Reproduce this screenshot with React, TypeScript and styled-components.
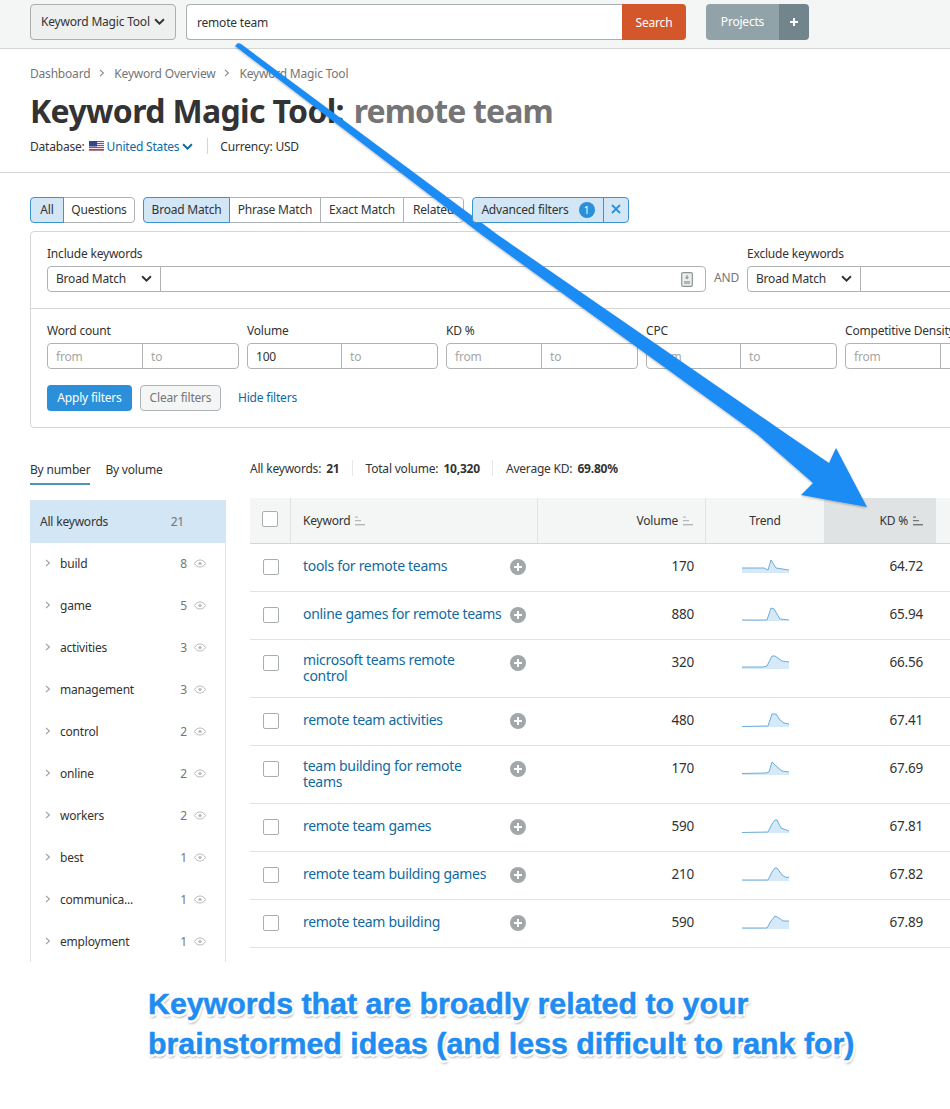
import React from "react";
import styled, { createGlobalStyle } from "styled-components";

const Global = createGlobalStyle`
  html, body { margin: 0; padding: 0; background: #fff; }
  * { box-sizing: border-box; }
`;

const Page = styled.div`
  position: relative;
  width: 950px;
  height: 1109px;
  overflow: hidden;
  background: #fff;
  color: #333;
  font-family: "Noto Sans", "Open Sans", sans-serif;
  font-size: 12px;
  letter-spacing: -0.2px;
`;

const TopBar = styled.header`
  display: flex;
  align-items: center;
  height: 49px;
  padding: 0 0 5px 30px;
  background: #f4f5f5;
  border-bottom: 1px solid #d4d6d6;
`;
const ToolSelect = styled.div`
  display: flex;
  align-items: center;
  justify-content: space-between;
  width: 146px;
  height: 36px;
  padding: 0 10px 0 10px;
  background: #eef0f0;
  border: 1px solid #a9aeb0;
  border-radius: 4px;
  color: #333;
  white-space: nowrap;
`;
const SearchInput = styled.div`
  display: flex;
  align-items: center;
  width: 436px;
  height: 36px;
  margin-left: 10px;
  padding: 2px 0 0 10px;
  background: #fff;
  border: 1px solid #a9aeb0;
  border-right: 0;
  border-radius: 4px 0 0 4px;
`;
const SearchButton = styled.div`
  display: flex;
  align-items: center;
  justify-content: center;
  width: 64px;
  height: 36px;
  padding-top: 2px;
  background: #d3572b;
  border-radius: 0 4px 4px 0;
  color: #fff;
`;
const ProjectsLabel = styled.div`
  display: flex;
  align-items: center;
  justify-content: center;
  width: 73px;
  height: 36px;
  margin-left: 20px;
  padding-bottom: 1px;
  background: #92a2a9;
  border-radius: 4px 0 0 4px;
  color: #fff;
`;
const ProjectsPlus = styled.div`
  display: flex;
  align-items: center;
  justify-content: center;
  width: 30px;
  height: 36px;
  background: #72858d;
  border-radius: 0 4px 4px 0;
  color: #fff;
`;

const Header = styled.section`
  height: 124px;
  padding: 16px 30px 0;
  border-bottom: 1px solid #d4d6d6;
`;
const Crumbs = styled.nav`
  display: flex;
  align-items: center;
  height: 16px;
  color: #757575;
`;
const CrumbSep = styled.span`
  display: inline-flex;
  margin: 0 9px 0 9px;
  color: #8a8a8a;
`;
const Title = styled.h1`
  margin: 8px 0 0;
  height: 44px;
  font-size: 32px;
  line-height: 44px;
  font-weight: 700;
  letter-spacing: -0.65px;
  color: #333;
  white-space: nowrap;
`;
const TitleQuery = styled.span`
  margin-left: 2px;
  letter-spacing: -0.85px;
  color: #757575;
`;
const MetaRow = styled.div`
  display: flex;
  align-items: center;
  height: 18px;
  margin-top: 4px;
`;
const BlueText = styled.span`
  color: #0f6a9f;
`;
const Flag = styled.svg`
  width: 15px;
  height: 10px;
  margin: 0 3px 0 4px;
`;
const MetaDivider = styled.span`
  width: 1px;
  height: 16px;
  margin: 0 12px 0 14px;
  background: #d4d6d6;
`;

const TabsRow = styled.div`
  display: flex;
  margin: 24px 0 8px 30px;
  gap: 8px;
`;
const Segment = styled.div`
  display: flex;
`;
const Tab = styled.div<{ $w: number; $active?: boolean }>`
  display: flex;
  align-items: center;
  justify-content: center;
  width: ${(p) => p.$w}px;
  height: 26px;
  margin-left: -1px;
  padding-bottom: 2px;
  background: ${(p) => (p.$active ? "#d2e6f5" : "#fff")};
  border: 1px solid ${(p) => (p.$active ? "#3d93cc" : "#b0b3b5")};
  position: relative;
  z-index: ${(p) => (p.$active ? 1 : 0)};
  color: #333;
  &:first-child {
    margin-left: 0;
    border-radius: 4px 0 0 4px;
  }
  &:last-child {
    border-radius: 0 4px 4px 0;
  }
`;
const TabBadge = styled.span`
  display: inline-flex;
  align-items: center;
  justify-content: center;
  width: 16px;
  height: 16px;
  margin: 2px 0 0 10px;
  background: #2b90d9;
  border-radius: 50%;
  color: #fff;
  font-size: 10px;
`;

const FilterPanel = styled.section`
  width: 1000px;
  margin-left: 30px;
  height: 197px;
  border: 1px solid #d4d6d6;
  border-radius: 4px;
`;
const IncludeBlock = styled.div`
  display: flex;
  height: 77px;
  padding: 13px 0 0 16px;
  border-bottom: 1px solid #d4d6d6;
`;
const FieldColumn = styled.div`
  display: flex;
  flex: none;
  flex-direction: column;
`;
const FieldLabel = styled.div`
  height: 16px;
  margin: 1px 0 4px;
  line-height: 16px;
  color: #333;
  white-space: nowrap;
`;
const InputRow = styled.div`
  display: flex;
  align-items: center;
`;
const MatchSelect = styled.div`
  display: flex;
  align-items: center;
  justify-content: space-between;
  width: 114px;
  height: 26px;
  padding: 0 8px 2px 8px;
  border: 1px solid #b0b3b5;
  border-radius: 4px 0 0 4px;
  color: #333;
`;
const MatchInput = styled.div<{ $w: number }>`
  display: flex;
  align-items: center;
  justify-content: flex-end;
  width: ${(p) => p.$w}px;
  height: 26px;
  margin-left: -1px;
  padding-right: 12px;
  border: 1px solid #b0b3b5;
  border-radius: 0 4px 4px 0;
`;
const AndLabel = styled.div`
  flex: none;
  width: 41px;
  margin-top: 21px;
  line-height: 24px;
  padding-left: 8px;
  color: #757575;
`;

const RangeBlock = styled.div`
  padding: 13px 0 0 16px;
`;
const RangeRow = styled.div`
  display: flex;
  gap: 8px;
`;
const RangeGroup = styled.div`
  display: flex;
  height: 26px;
  border: 1px solid #b0b3b5;
  border-radius: 4px;
`;
const RangeCell = styled.div<{ $w: number; $filled?: boolean }>`
  display: flex;
  align-items: center;
  width: ${(p) => p.$w}px;
  padding-left: 8px;
  color: ${(p) => (p.$filled ? "#333" : "#a6a6a6")};
  & + & {
    border-left: 1px solid #b0b3b5;
  }
`;
const FilterActions = styled.div`
  display: flex;
  align-items: center;
  margin-top: 16px;
`;
const ApplyButton = styled.div`
  display: flex;
  align-items: center;
  justify-content: center;
  width: 85px;
  height: 26px;
  padding-bottom: 2px;
  background: #2b90d9;
  border-radius: 4px;
  color: #fff;
`;
const ClearButton = styled.div`
  display: flex;
  align-items: center;
  justify-content: center;
  width: 81px;
  height: 26px;
  margin-left: 8px;
  padding-bottom: 2px;
  background: #f4f5f5;
  border: 1px solid #b0b3b5;
  border-radius: 4px;
  color: #757575;
`;
const HideLink = styled.div`
  margin: -2px 0 0 17px;
  color: #0f6a9f;
`;

const Workspace = styled.div`
  display: flex;
  height: 535px;
  padding-left: 30px;
`;
const Sidebar = styled.aside`
  flex: 0 0 196px;
`;
const SideTabs = styled.div`
  display: flex;
  gap: 15px;
  height: 57px;
  padding-top: 33px;
`;
const SideTab = styled.div<{ $active?: boolean }>`
  height: 24px;
  line-height: 18px;
  border-bottom: ${(p) => (p.$active ? "2px solid #4e94b5" : "0")};
`;
const SideList = styled.div`
  height: 462px;
  margin-top: 15px;
  border: 1px solid #e0e2e3;
  border-top: 0;
  border-bottom: 0;
`;
const SideAll = styled.div`
  display: flex;
  align-items: center;
  height: 43px;
  margin: 0 -1px;
  padding: 0 10px;
  background: #d2e6f5;
`;
const SideAllLabel = styled.span`
  flex: 1;
`;
const SideAllCount = styled.span`
  margin-right: 32px;
  color: #757575;
`;
const SideRow = styled.div`
  display: flex;
  align-items: center;
  height: 42px;
  padding: 0 19px 2px 14px;
`;
const SideLabel = styled.span`
  flex: 1;
  margin-left: 9px;
  color: #333;
`;
const SideCount = styled.span`
  margin-right: 7px;
  color: #757575;
`;

const Main = styled.main`
  flex: 0 0 724px;
  margin-left: 24px;
`;
const Stats = styled.div`
  display: flex;
  align-items: center;
  height: 70px;
  padding-top: 10px;
`;
const StatValue = styled.b`
  margin-left: 5px;
  font-weight: 700;
`;
const StatDivider = styled.span`
  width: 1px;
  height: 16px;
  margin: 0 13px 0 12px;
  background: #e6e7e8;
`;
const TableGrid = `
  display: grid;
  grid-template-columns: 41px 247px 168px 119px 111px 38px;
`;
const HeadRow = styled.div`
  ${TableGrid}
  height: 46px;
  border-bottom: 1px solid #d4d6d6;
`;
const HeadCell = styled.div<{ $align?: string; $sorted?: boolean }>`
  display: flex;
  align-items: center;
  justify-content: ${(p) => p.$align || "flex-start"};
  gap: 5px;
  padding: 0 ${(p) => (p.$sorted ? 13 : 12)}px 0 12px;
  background: ${(p) => (p.$sorted ? "#e0e3e4" : "#f4f5f5")};
  border-right: ${(p) => (p.$sorted ? "0" : "1px solid #e0e2e3")};
  color: #333;
`;
const CheckHeadCell = styled(HeadCell)`
  padding: 0 0 4px 0;
`;
const BodyRow = styled.div<{ $h: number }>`
  ${TableGrid}
  height: ${(p) => p.$h}px;
  border-bottom: 1px solid #e0e2e3;
  align-items: start;
`;
const CheckCell = styled.div`
  display: flex;
  justify-content: center;
  padding-top: 15px;
`;
const HeadCheck = styled.div`
  width: 16px;
  height: 16px;
  background: #fff;
  border: 1px solid #a9aeb0;
  border-radius: 2px;
`;
const Check = styled(HeadCheck)``;
const KeywordCell = styled.div`
  display: flex;
  justify-content: space-between;
  padding: 14px 12px 0 12px;
`;
const KeywordLink = styled.span<{ $wrapped?: boolean }>`
  width: ${(p) => (p.$wrapped ? 180 : 202)}px;
  margin-top: ${(p) => (p.$wrapped ? -2 : 0)}px;
  font-size: 14px;
  line-height: 16px;
  letter-spacing: -0.3px;
  color: #0f6a9f;
`;
const PlusDot = styled.span`
  display: flex;
  align-items: center;
  justify-content: center;
  flex: none;
  width: 16px;
  height: 16px;
  margin-top: 1px;
  background: #a2a7aa;
  border-radius: 50%;
`;
const NumCell = styled.div<{ $right?: number }>`
  padding: 14px ${(p) => p.$right ?? 12}px 0 0;
  font-size: 13.5px;
  line-height: 16px;
  text-align: right;
  color: #333;
`;
const TrendCell = styled.div`
  display: flex;
  justify-content: center;
  padding-top: 13px;
  padding-right: 1px;
`;

const Caption = styled.p`
  margin: 0;
  padding: 21px 0 0 148px;
  font-family: "Liberation Sans", Arial, sans-serif;
  font-size: 30.35px;
  line-height: 40px;
  font-weight: 700;
  letter-spacing: 0;
  color: #1e8cf0;
  white-space: nowrap;
  -webkit-text-stroke: 0.5px #1e8cf0;
  text-shadow: -2px -1px 0 #fff, 2px -1px 0 #fff, -2px 2px 0 #fff, 2px 2px 0 #fff, 0 -2px 0 #fff, 0 3px 1px #fff,
    1px 3px 3px rgba(0, 0, 0, 0.55);
`;

const ArrowLayer = styled.svg`
  position: absolute;
  left: 0;
  top: 0;
  pointer-events: none;
`;

const Chevron = ({ size = 10, color = "#333" }: { size?: number; color?: string }) => (
  <svg width={size} height={size} viewBox="0 0 10 10" fill="none">
    <path d="M1 3l4 4 4-4" stroke={color} strokeWidth="1.8" />
  </svg>
);
const RightChevron = ({ color = "#9a9ea1" }: { color?: string }) => (
  <svg width="6" height="8" viewBox="0 0 6 8" fill="none">
    <path d="M1 .8L4.4 4 1 7.2" stroke={color} strokeWidth="1.1" />
  </svg>
);
const Eye = () => (
  <svg width="12" height="9" viewBox="0 0 12 9" fill="none">
    <path d="M.5 4.5C2 2 4 1 6 1s4 1 5.5 3.5C10 7 8 8 6 8S2 7 .5 4.5z" stroke="#b4b8ba" strokeWidth="1" />
    <circle cx="6" cy="4.5" r="1.6" fill="#b4b8ba" />
  </svg>
);
const SortIcon = ({ color = "#b4b8ba" }: { color?: string }) => (
  <svg width="10" height="10" viewBox="0 0 10 10" fill={color}>
    <rect x="0" y="0.5" width="3" height="1.2" />
    <rect x="0" y="4" width="6" height="1.2" />
    <rect x="0" y="8" width="10" height="1.4" />
  </svg>
);
const Plus = ({ size = 8, width = 2 }: { size?: number; width?: number }) => (
  <svg width={size} height={size} viewBox="0 0 8 8" stroke="#fff" strokeWidth={width}>
    <path d="M4 0v8M0 4h8" />
  </svg>
);
const UsFlag = () => (
  <Flag viewBox="0 0 15 10">
    <rect width="15" height="10" fill="#f3e6ea" />
    {[0, 2, 4, 6, 8].map((y) => (
      <rect key={y} y={y} width="15" height="1" fill="#c8384a" />
    ))}
    <rect width="8" height="5.5" fill="#38458a" />
    <rect y="9.4" width="15" height=".6" fill="#8a3040" />
  </Flag>
);
const ImportIcon = () => (
  <svg width="12" height="15" viewBox="0 0 12 15" fill="none">
    <rect x=".7" y=".7" width="10.6" height="13.6" rx="1.4" stroke="#8f9497" strokeWidth="1.2" fill="#eceded" />
    <path d="M6 3v3M4.6 5L6 6.6 7.4 5" stroke="#8f9497" strokeWidth="1.1" />
    <rect x="3" y="9" width="6" height="3" fill="#b0b4b6" />
  </svg>
);
const Spark = ({ pts }: { pts: string }) => (
  <svg width="47" height="16" viewBox="0 0 47 16">
    <polygon points={`0,16 ${pts} 47,16`} fill="#d5e9f9" />
    <polyline points={pts} fill="none" stroke="#6fadd8" strokeWidth="1" />
  </svg>
);

const sideItems: [string, number][] = [
  ["build", 8],
  ["game", 5],
  ["activities", 3],
  ["management", 3],
  ["control", 2],
  ["online", 2],
  ["workers", 2],
  ["best", 1],
  ["communica...", 1],
  ["employment", 1],
];

const rows = [
  { k: "tools for remote teams", v: 170, d: "64.72", h: 48, p: "0,11 22,11 26,13 29,3 34,11 47,13" },
  { k: "online games for remote teams", v: 880, d: "65.94", h: 48, p: "0,15 25,15 29,3 32,4 38,14 47,15" },
  { k: "microsoft teams remote control", v: 320, d: "66.56", h: 58, p: "0,14 21,14 25,13 30,3 33,3 40,8 47,9" },
  { k: "remote team activities", v: 480, d: "67.41", h: 48, p: "0,15.5 26,15 30,3 34,3 38,9 42,12 47,13" },
  { k: "team building for remote teams", v: 170, d: "67.69", h: 58, p: "0,14.5 24,14 27,13 30,3 34,7 40,12 47,13" },
  { k: "remote team games", v: 590, d: "67.81", h: 48, p: "0,15.5 26,15 30,7 33,3 35,3 39,11 47,14" },
  { k: "remote team building games", v: 210, d: "67.82", h: 48, p: "0,15 26,15 30,7 33,3 35,3 40,10 44,12.5 47,12" },
  { k: "remote team building", v: 590, d: "67.89", h: 48, p: "0,15 25,15 29,8 33,3 37,5 41,8 47,8" },
];

export default function App() {
  return (
    <Page>
      <Global />
      <TopBar>
        <ToolSelect>
          Keyword Magic Tool <Chevron size={11} />
        </ToolSelect>
        <SearchInput>remote team</SearchInput>
        <SearchButton>Search</SearchButton>
        <ProjectsLabel>Projects</ProjectsLabel>
        <ProjectsPlus>
          <Plus />
        </ProjectsPlus>
      </TopBar>
      <Header>
        <Crumbs>
          Dashboard
          <CrumbSep>
            <RightChevron color="#8a8a8a" />
          </CrumbSep>
          Keyword Overview
          <CrumbSep>
            <RightChevron color="#8a8a8a" />
          </CrumbSep>
          Keyword Magic Tool
        </Crumbs>
        <Title>
          Keyword Magic Tool: <TitleQuery>remote team</TitleQuery>
        </Title>
        <MetaRow>
          Database:
          <UsFlag />
          <BlueText>United States</BlueText>
          &nbsp;
          <Chevron size={11} color="#0f6a9f" />
          <MetaDivider />
          Currency: USD
        </MetaRow>
      </Header>
      <TabsRow>
        <Segment>
          <Tab $w={34} $active>All</Tab>
          <Tab $w={72}>Questions</Tab>
        </Segment>
        <Segment>
          <Tab $w={87} $active>Broad Match</Tab>
          <Tab $w={92}>Phrase Match</Tab>
          <Tab $w={84}>Exact Match</Tab>
          <Tab $w={61}>Related</Tab>
        </Segment>
        <Segment>
          <Tab $w={132} $active>
            Advanced filters
            <TabBadge>1</TabBadge>
          </Tab>
          <Tab $w={26} $active>
            <svg width="10" height="10" viewBox="0 0 10 10" stroke="#2b90d9" strokeWidth="1.8">
              <path d="M1 1l8 8M9 1l-8 8" />
            </svg>
          </Tab>
        </Segment>
      </TabsRow>
      <FilterPanel>
        <IncludeBlock>
          <FieldColumn>
            <FieldLabel>Include keywords</FieldLabel>
            <InputRow>
              <MatchSelect>
                Broad Match <Chevron size={11} />
              </MatchSelect>
              <MatchInput $w={546}>
                <ImportIcon />
              </MatchInput>
            </InputRow>
          </FieldColumn>
          <AndLabel>AND</AndLabel>
          <FieldColumn>
            <FieldLabel>Exclude keywords</FieldLabel>
            <InputRow>
              <MatchSelect>
                Broad Match <Chevron size={11} />
              </MatchSelect>
              <MatchInput $w={200} />
            </InputRow>
          </FieldColumn>
        </IncludeBlock>
        <RangeBlock>
          <RangeRow>
            <FieldColumn>
              <FieldLabel>Word count</FieldLabel>
              <RangeGroup>
                <RangeCell $w={94}>from</RangeCell>
                <RangeCell $w={96}>to</RangeCell>
              </RangeGroup>
            </FieldColumn>
            <FieldColumn>
              <FieldLabel>Volume</FieldLabel>
              <RangeGroup>
                <RangeCell $w={93} $filled>100</RangeCell>
                <RangeCell $w={96}>to</RangeCell>
              </RangeGroup>
            </FieldColumn>
            <FieldColumn>
              <FieldLabel>KD %</FieldLabel>
              <RangeGroup>
                <RangeCell $w={94}>from</RangeCell>
                <RangeCell $w={96}>to</RangeCell>
              </RangeGroup>
            </FieldColumn>
            <FieldColumn>
              <FieldLabel>CPC</FieldLabel>
              <RangeGroup>
                <RangeCell $w={93}>from</RangeCell>
                <RangeCell $w={96}>to</RangeCell>
              </RangeGroup>
            </FieldColumn>
            <FieldColumn>
              <FieldLabel>Competitive Density</FieldLabel>
              <RangeGroup>
                <RangeCell $w={94}>from</RangeCell>
                <RangeCell $w={96} />
              </RangeGroup>
            </FieldColumn>
          </RangeRow>
          <FilterActions>
            <ApplyButton>Apply filters</ApplyButton>
            <ClearButton>Clear filters</ClearButton>
            <HideLink>Hide filters</HideLink>
          </FilterActions>
        </RangeBlock>
      </FilterPanel>
      <Workspace>
        <Sidebar>
          <SideTabs>
            <SideTab $active>By number</SideTab>
            <SideTab>By volume</SideTab>
          </SideTabs>
          <SideList>
            <SideAll>
              <SideAllLabel>All keywords</SideAllLabel>
              <SideAllCount>21</SideAllCount>
            </SideAll>
            {sideItems.map(([label, count]) => (
              <SideRow key={label}>
                <RightChevron />
                <SideLabel>{label}</SideLabel>
                <SideCount>{count}</SideCount>
                <Eye />
              </SideRow>
            ))}
          </SideList>
        </Sidebar>
        <Main>
          <Stats>
            All keywords: <StatValue>21</StatValue>
            <StatDivider />
            Total volume: <StatValue>10,320</StatValue>
            <StatDivider />
            Average KD: <StatValue>69.80%</StatValue>
          </Stats>
          <HeadRow>
            <CheckHeadCell $align="center">
              <HeadCheck />
            </CheckHeadCell>
            <HeadCell>
              Keyword <SortIcon />
            </HeadCell>
            <HeadCell $align="flex-end">
              Volume <SortIcon />
            </HeadCell>
            <HeadCell $align="center">Trend</HeadCell>
            <HeadCell $align="flex-end" $sorted>
              KD % <SortIcon color="#6f7578" />
            </HeadCell>
            <HeadCell />
          </HeadRow>
          {rows.map((r) => (
            <BodyRow key={r.k} $h={r.h}>
              <CheckCell>
                <Check />
              </CheckCell>
              <KeywordCell>
                <KeywordLink $wrapped={r.h > 48}>{r.k}</KeywordLink>
                <PlusDot>
                  <Plus size={8} width={2} />
                </PlusDot>
              </KeywordCell>
              <NumCell>{r.v}</NumCell>
              <TrendCell>
                <Spark pts={r.p} />
              </TrendCell>
              <NumCell $right={13}>{r.d}</NumCell>
              <div />
            </BodyRow>
          ))}
        </Main>
      </Workspace>
      <Caption>
        Keywords that are broadly related to your
        <br />
        brainstormed ideas (and less difficult to rank for)
      </Caption>
      <ArrowLayer width="950" height="1109" viewBox="0 0 950 1109">
        <defs>
          <filter id="arrowShadow" x="-5%" y="-5%" width="110%" height="110%">
            <feDropShadow dx="0" dy="1" stdDeviation="1" floodColor="#000" floodOpacity="0.3" />
          </filter>
        </defs>
        <polygon
          filter="url(#arrowShadow)"
          fill="#1e8cf5"
          points="235,46 238,43 241,44 498,235 788,435 829,463 836,448 867,507 801,495 813,483 758,435 482,235"
        />
      </ArrowLayer>
    </Page>
  );
}
